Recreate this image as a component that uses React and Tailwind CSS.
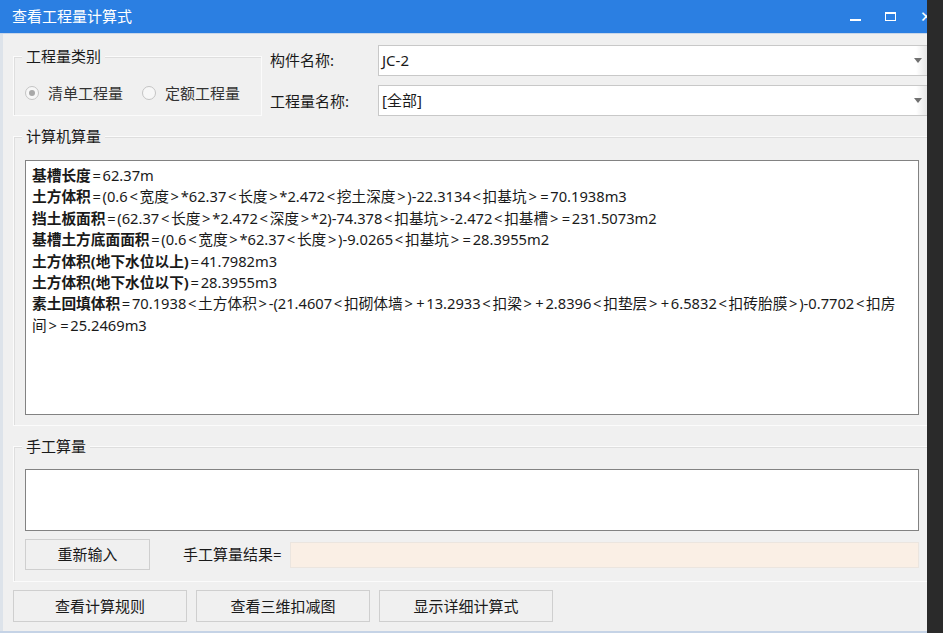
import React from 'react';

const font = { fontFamily: '"Noto Sans", "Noto Sans CJK SC", sans-serif' };

const lines = [
  ['基槽长度', '=62.37m'],
  ['土方体积', '=(0.6<宽度>*62.37<长度>*2.472<挖土深度>)-22.3134<扣基坑>=70.1938m3'],
  ['挡土板面积', '=(62.37<长度>*2.472<深度>*2)-74.378<扣基坑>-2.472<扣基槽>=231.5073m2'],
  ['基槽土方底面面积', '=(0.6<宽度>*62.37<长度>)-9.0265<扣基坑>=28.3955m2'],
  ['土方体积(地下水位以上)', '=41.7982m3'],
  ['土方体积(地下水位以下)', '=28.3955m3'],
  ['素土回填体积', '=70.1938<土方体积>-(21.4607<扣砌体墙>+13.2933<扣梁>+2.8396<扣垫层>+6.5832<扣砖胎膜>)-0.7702<扣房'],
  ['', '间>=25.2469m3'],
];

// the symbols < > = + are wide in the original font
function Formula({ text }) {
  return text.split(/([<>=+])/).map((part, i) =>
    /^[<>=+]$/.test(part) ? (
      <span key={i} className="inline-block w-[11.8px] text-center">{part}</span>
    ) : (
      part
    )
  );
}

function Radio({ checked, label }) {
  return (
    <div className="flex items-center gap-[9px]">
      <span className="flex h-[14px] w-[14px] items-center justify-center rounded-full border border-[#c4c4c4] bg-[#f7f7f7]">
        {checked && <span className="h-[6px] w-[6px] rounded-full bg-[#a8a8a8]" />}
      </span>
      <span>{label}</span>
    </div>
  );
}

function Combo({ value }) {
  return (
    <div className="flex h-[31px] items-center justify-between border border-r-0 border-[#c8c8c8] bg-gradient-to-r from-white from-[98%] to-[#e6e6e6] pl-[3px] pr-[5px]">
      <span>{value}</span>
      <svg width="8" height="5" viewBox="0 0 8 5"><path d="M0 0h8L4 5z" fill="#707070" /></svg>
    </div>
  );
}

function Button({ children, className }) {
  return (
    <button className={`flex items-center justify-center border border-[#cfcfcf] bg-[#f0f0f0] text-[#1a1a1a] ${className}`}>
      {children}
    </button>
  );
}

export default function App() {
  return (
    <div className="flex h-[633px] w-[943px] overflow-hidden bg-[#2a2a2a] text-[15px] text-[#1a1a1a]" style={font}>
      <div className="flex w-[927px] flex-col bg-[#f0f0f0]">
        {/* title bar */}
        <div className="flex h-[33px] shrink-0 items-center justify-between bg-[#2b7fe2] pl-[12px] text-white">
          <span>查看工程量计算式</span>
          <div className="flex items-center">
            <span className="mr-[24px] mt-[6px] h-[2px] w-[11px] bg-white" />
            <span className="mr-[24px] h-[9px] w-[11px] border border-t-2 border-white" />
            <span className="w-[7px] overflow-hidden text-[15px] leading-none">✕</span>
          </div>
        </div>
        <div className="h-px bg-[#c9d6e8]" />

        {/* body */}
        <div className="flex flex-1 flex-col border-l-[3px] border-[#dde3ea] pl-[10px]">
          {/* top row */}
          <div className="mt-[11px] flex items-start">
            <div className="relative mt-[11px] h-[60px] w-[249px] border border-[#fbfbfb] shadow-[inset_1px_1px_0_#dedede]">
              <span className="absolute left-[8px] top-[-11px] bg-[#f0f0f0] px-[4px] leading-[20px]">工程量类别</span>
              <div className="mt-[25px] flex items-center gap-[19px] pl-[11px] text-[#333]">
                <Radio checked label="清单工程量" />
                <Radio label="定额工程量" />
              </div>
            </div>
            <div className="ml-[8px] flex w-[108px] flex-col">
              <div className="flex h-[31px] items-center">构件名称:</div>
              <div className="mt-[9px] flex h-[33px] items-center">工程量名称:</div>
            </div>
            <div className="flex flex-1 flex-col gap-[9px]">
              <Combo value="JC-2" />
              <Combo value="[全部]" />
            </div>
          </div>

          {/* 计算机算量 */}
          <div className="relative mt-[18px] h-[290px] border border-r-0 border-[#fbfbfb] shadow-[inset_1px_1px_0_#dedede] pl-[11px] pr-[8px] pt-[23px]">
            <span className="absolute left-[8px] top-[-11px] bg-[#f0f0f0] px-[4px] leading-[20px]">计算机算量</span>
            <div className="h-[255px] border border-[#828282] bg-white px-[6px] pt-[4px] text-[14.7px] leading-[21.4px]">
              {lines.map(([b, r], i) => (
                <div key={i} className="whitespace-nowrap">
                  {b && <b className="font-bold">{b}</b>}
                  <Formula text={r} />
                </div>
              ))}
            </div>
          </div>

          {/* 手工算量 */}
          <div className="relative mt-[20px] h-[136px] border border-r-0 border-[#fbfbfb] shadow-[inset_1px_1px_0_#dedede] pl-[11px] pr-[8px] pt-[22px]">
            <span className="absolute left-[8px] top-[-11px] bg-[#f0f0f0] px-[4px] leading-[20px]">手工算量</span>
            <div className="h-[62px] border border-[#828282] bg-white" />
            <div className="mt-[8px] flex items-center">
              <Button className="h-[31px] w-[125px]">重新输入</Button>
              <span className="ml-[33px]">手工算量结果=</span>
              <div className="ml-[8px] h-[26px] flex-1 border border-[#ebe5df] bg-[#faefe5]" />
            </div>
          </div>

          {/* bottom buttons */}
          <div className="mt-[8px] flex gap-[9px]">
            <Button className="h-[32px] w-[174px]">查看计算规则</Button>
            <Button className="h-[32px] w-[174px]">查看三维扣减图</Button>
            <Button className="h-[32px] w-[174px]">显示详细计算式</Button>
          </div>
        </div>
        <div className="h-[2px] bg-[#c5d3e6]" />
      </div>
    </div>
  );
}
